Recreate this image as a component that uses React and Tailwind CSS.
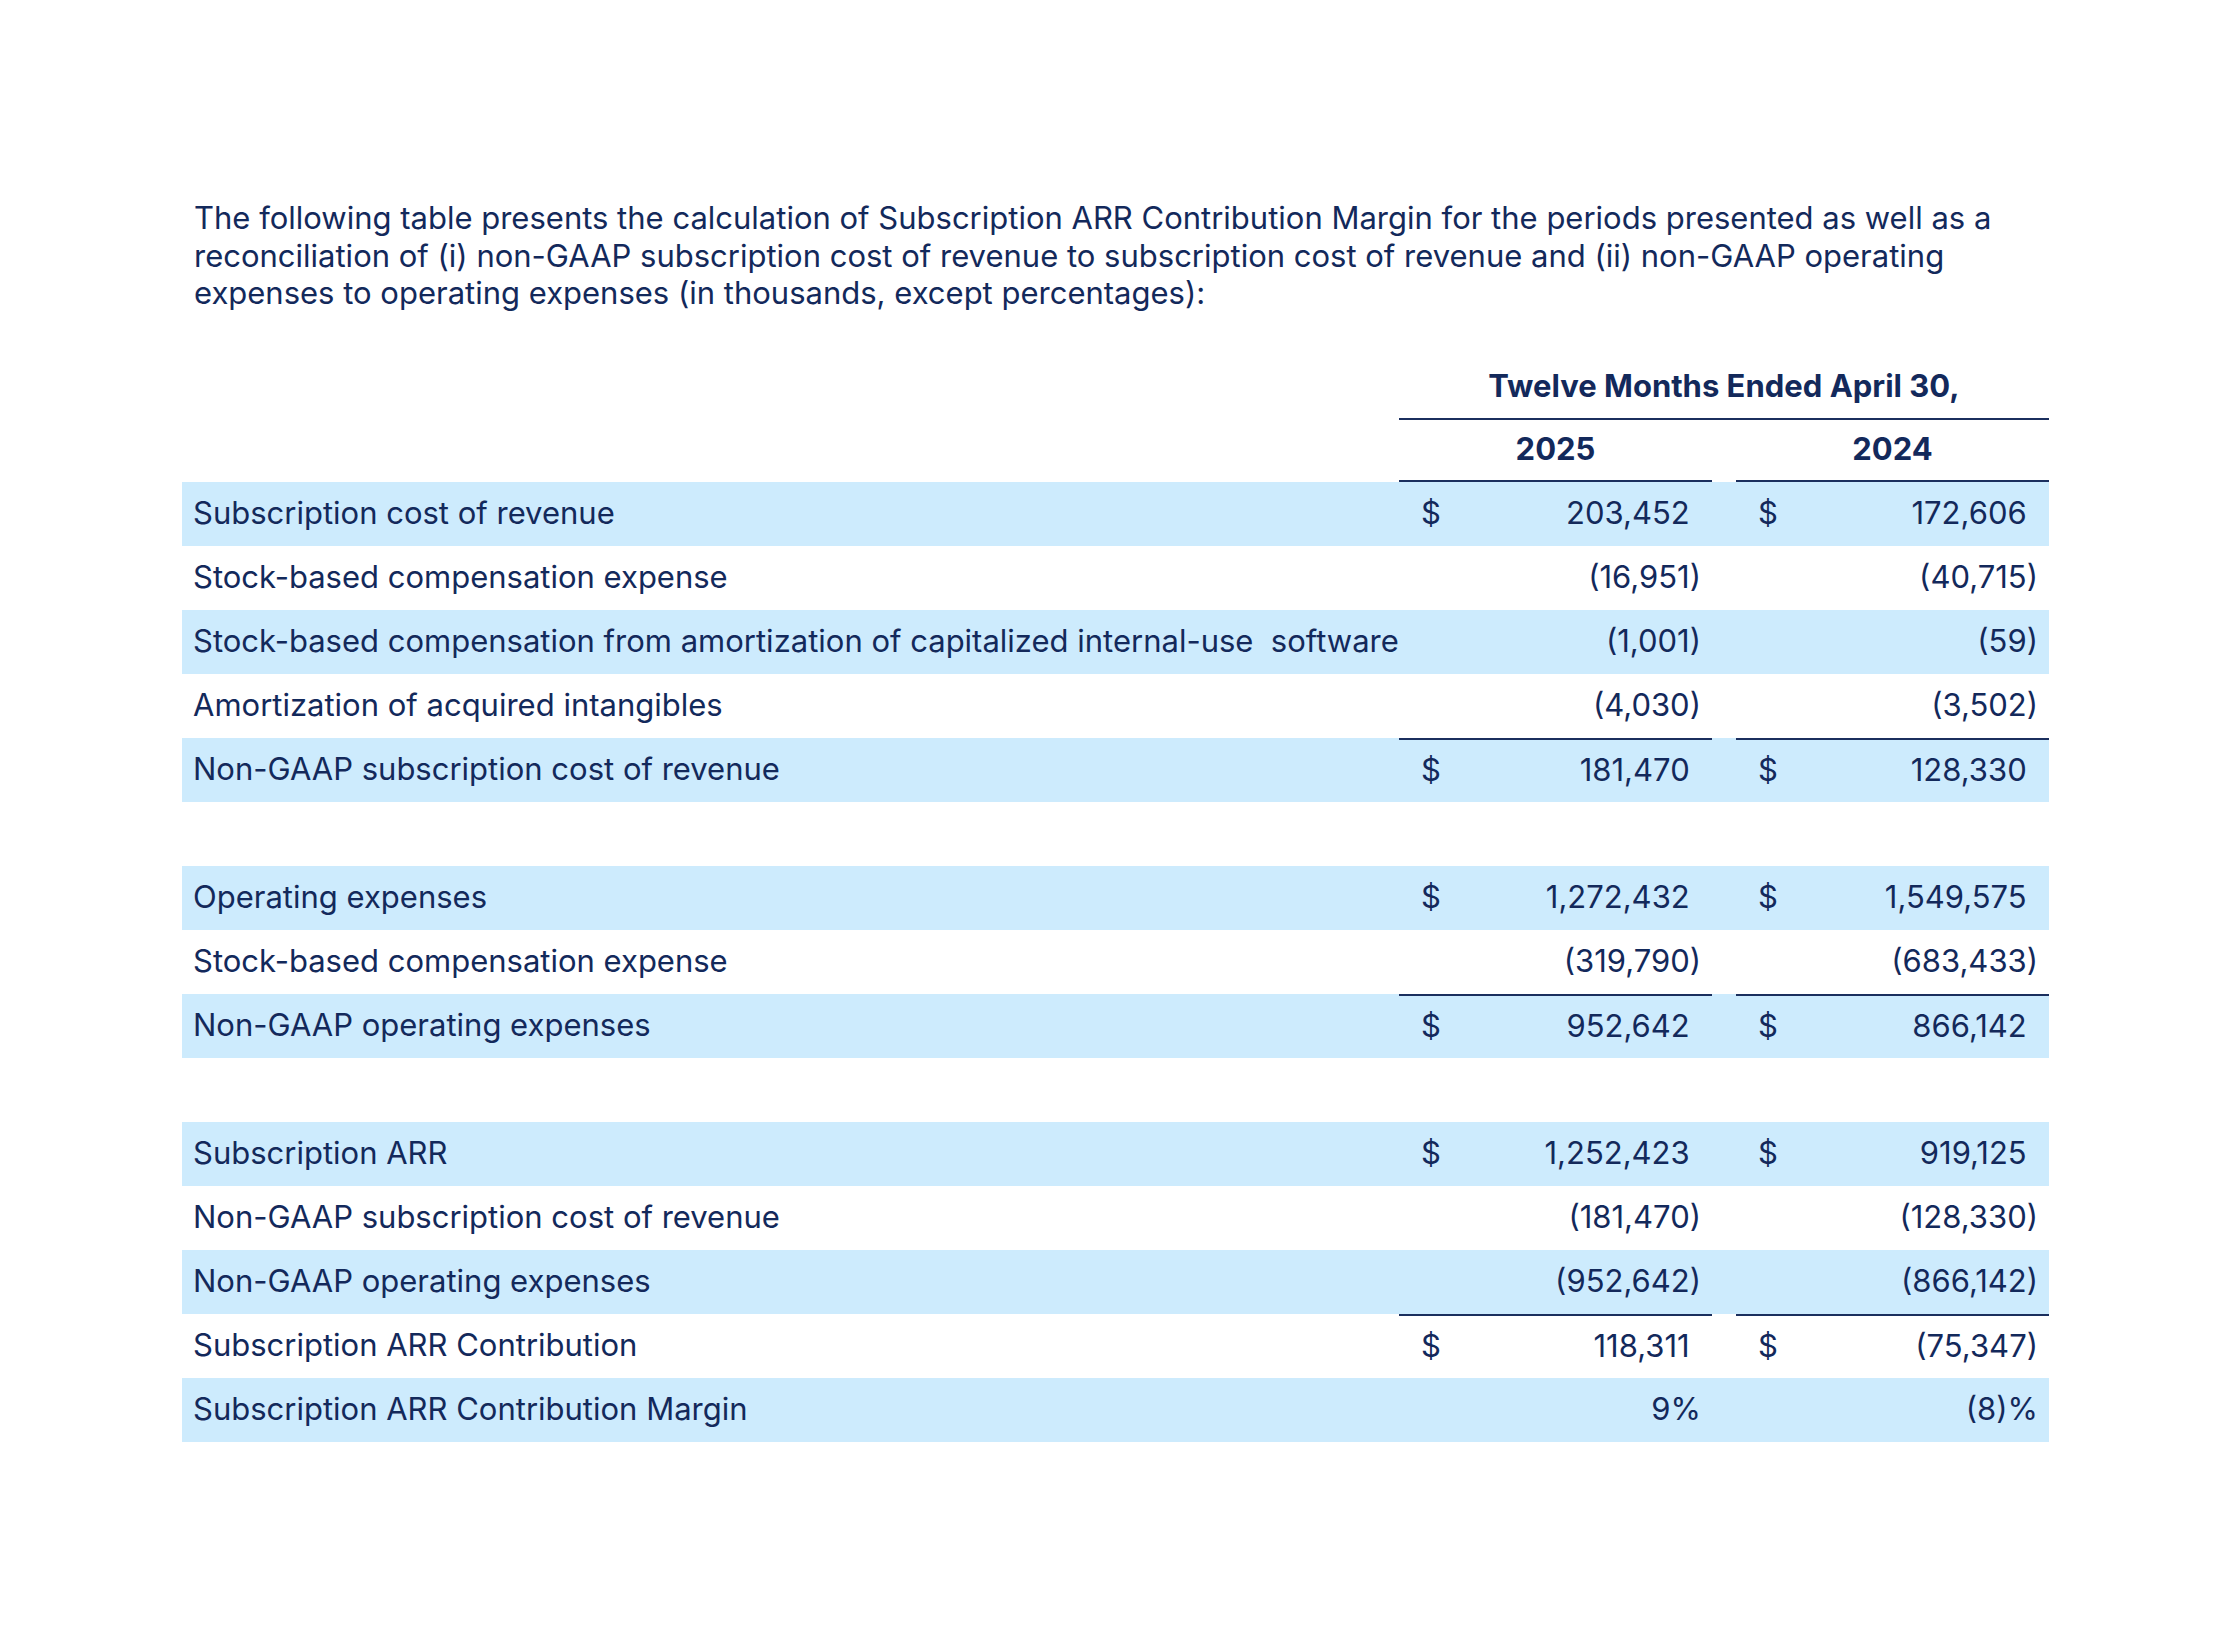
const rows = [
  { label: 'Subscription cost of revenue', a: '203,452', b: '172,606', dollar: true, band: true },
  { label: 'Stock-based compensation expense', a: '(16,951)', b: '(40,715)' },
  { label: 'Stock-based compensation from amortization of capitalized internal-use\u00a0 software', a: '(1,001)', b: '(59)', band: true },
  { label: 'Amortization of acquired intangibles', a: '(4,030)', b: '(3,502)' },
  { label: 'Non-GAAP subscription cost of revenue', a: '181,470', b: '128,330', dollar: true, band: true, rule: true },
  { spacer: true },
  { label: 'Operating expenses', a: '1,272,432', b: '1,549,575', dollar: true, band: true },
  { label: 'Stock-based compensation expense', a: '(319,790)', b: '(683,433)' },
  { label: 'Non-GAAP operating expenses', a: '952,642', b: '866,142', dollar: true, band: true, rule: true },
  { spacer: true },
  { label: 'Subscription ARR', a: '1,252,423', b: '919,125', dollar: true, band: true },
  { label: 'Non-GAAP subscription cost of revenue', a: '(181,470)', b: '(128,330)' },
  { label: 'Non-GAAP operating expenses', a: '(952,642)', b: '(866,142)', band: true },
  { label: 'Subscription ARR Contribution', a: '118,311', b: '(75,347)', dollar: true, rule: true },
  { label: 'Subscription ARR Contribution Margin', a: '9%', b: '(8)%', band: true },
];

function Amount({ value, dollar, rule }) {
  const closes = value.endsWith(')') || value.endsWith('%');
  return (
    <div className={`h-full flex items-center justify-between pl-[22px] pr-[11px] ${rule ? 'border-t-2 border-[#1b2f5e]' : ''}`}>
      <span>{dollar ? '$' : ''}</span>
      <span>
        {value}
        {!closes && <span className="invisible">)</span>}
      </span>
    </div>
  );
}

export default function App() {
  return (
    <div className="w-[2231px] h-[1644px] bg-white text-[#13295b]" style={{ fontFamily: 'Inter, "Noto Sans", sans-serif' }}>
      <div className="pl-[182px] pt-[199px]">
        <p className="ml-[12px] w-[1840px] text-[31px] leading-[37.5px]">
          The following table presents the calculation of Subscription ARR Contribution Margin for the periods presented as well as a reconciliation of (i) non-GAAP subscription cost of revenue to subscription cost of revenue and (ii) non-GAAP operating expenses to operating expenses (in thousands, except percentages):
        </p>

        <div className="mt-[44px] w-[1867px] text-[31px]">
          <div className="grid grid-cols-[1217px_650px] h-[64px]">
            <div />
            <div className="flex items-center justify-center font-bold border-b-2 border-[#1b2f5e]">
              Twelve Months Ended April 30,
            </div>
          </div>
          <div className="grid grid-cols-[1217px_313px_24px_313px] h-[62px]">
            <div />
            <div className="flex items-center justify-center font-bold border-b-2 border-[#1b2f5e]">2025</div>
            <div />
            <div className="flex items-center justify-center font-bold border-b-2 border-[#1b2f5e]">2024</div>
          </div>

          {rows.map((row, i) =>
            row.spacer ? (
              <div key={i} className="h-[64px]" />
            ) : (
              <div key={i} className={`grid grid-cols-[1217px_313px_24px_313px] h-[64px] ${row.band ? 'bg-[#cdebfd]' : ''}`}>
                <div className="flex items-center pl-[11px] whitespace-nowrap">{row.label}</div>
                <Amount value={row.a} dollar={row.dollar} rule={row.rule} />
                <div />
                <Amount value={row.b} dollar={row.dollar} rule={row.rule} />
              </div>
            )
          )}
        </div>
      </div>
    </div>
  );
}
